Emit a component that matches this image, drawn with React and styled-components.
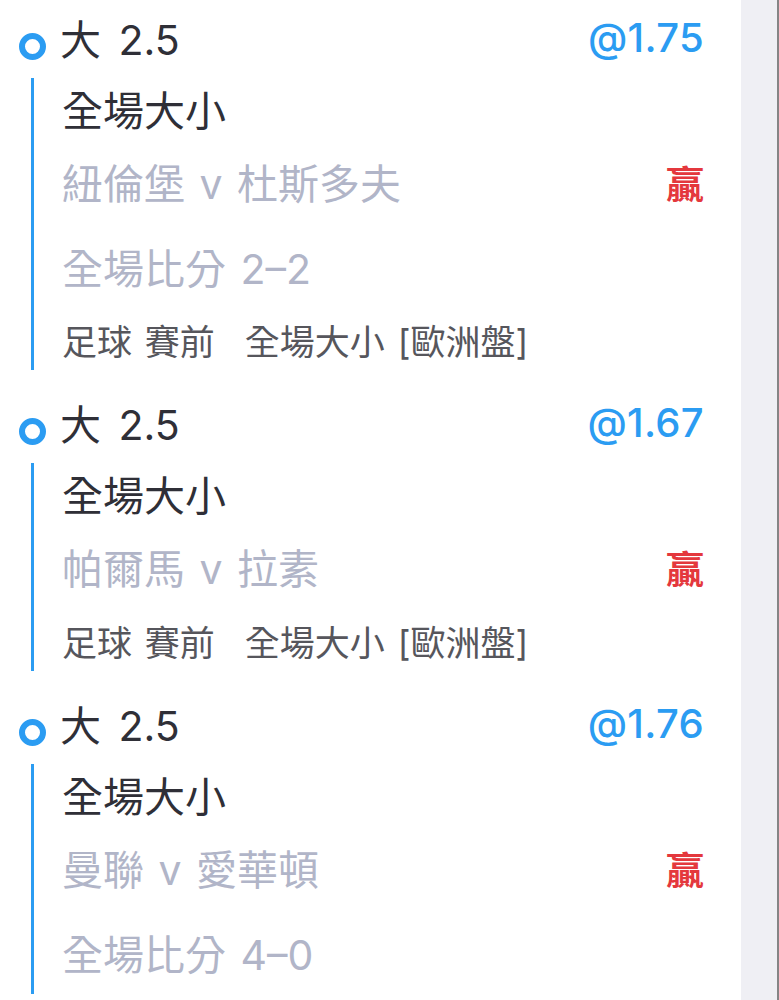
import styled, { createGlobalStyle } from 'styled-components';

const GlobalStyle = createGlobalStyle`
    html, body {
        margin: 0;
        padding: 0;
        background: #fff;
    }
    body {
        font-family: Inter, "Noto Sans CJK TC", sans-serif;
    }
`

const Pagina = styled.div`
    display: flex;
    width: 779px;
    height: 1000px;
    overflow: hidden;
`

const Lista = styled.main`
    width: 741px;
    background: #fff;
    padding-top: 1px;
    display: flex;
    flex-direction: column;
    gap: 16px;
`

const Lateral = styled.aside`
    flex: 1;
    background: #efeff4;
    border-right: 2px solid #858585;
`

const Aposta = styled.section`
    display: flex;
    flex-direction: column;
`

const Cabecalho = styled.div`
    display: flex;
    align-items: center;
    height: 72px;
    padding: 0 37px 0 19px;
    font-size: 41px;
    color: #2f2f37;
    word-spacing: 6px;
`

const Ponto = styled.span`
    width: 15px;
    height: 15px;
    border: 6px solid #2b9cf2;
    border-radius: 50%;
    margin-top: 18px;
    margin-right: 14px;
    flex-shrink: 0;
`

const Selecao = styled.span`
    flex: 1;
`

const Odd = styled.span`
    color: #2b9cf2;
    font-weight: 500;
    font-size: 40px;
    letter-spacing: 0.3px;
`

const Corpo = styled.div`
    margin: 5px 0 0 31px;
    border-left: 3px solid #2b9cf2;
    padding: 0 37px 0 28px;
    display: flex;
    flex-direction: column;
`

const Linha = styled.div`
    display: flex;
    align-items: center;
    justify-content: space-between;
    height: ${props => props.altura}px;
    font-size: ${props => props.tamanho || 41}px;
    color: ${props => props.cor};
    white-space: nowrap;
    word-spacing: 3px;
`

const Resultado = styled.span`
    color: #e4383d;
    font-weight: 700;
    font-size: 38px;
`

const Mercado = styled.span`
    margin-left: 30px;
`

const apostas = [
    { odd: '@1.75', jogo: '紐倫堡 v 杜斯多夫', placar: '全場比分 2–2', info: true },
    { odd: '@1.67', jogo: '帕爾馬 v 拉素', info: true },
    { odd: '@1.76', jogo: '曼聯 v 愛華頓', placar: '全場比分 4–0' },
]

function App() {
    return (
        <Pagina>
            <GlobalStyle />
            <Lista>
                {apostas.map(aposta => (
                    <Aposta key={aposta.odd}>
                        <Cabecalho>
                            <Ponto />
                            <Selecao>大 2.5</Selecao>
                            <Odd>{aposta.odd}</Odd>
                        </Cabecalho>
                        <Corpo>
                            <Linha altura={60} cor="#2f2f37">全場大小</Linha>
                            <Linha altura={86} cor="#b1b5c8">
                                <span>{aposta.jogo}</span>
                                <Resultado>贏</Resultado>
                            </Linha>
                            {aposta.placar && (
                                <Linha altura={84} cor="#b1b5c8">{aposta.placar}</Linha>
                            )}
                            {aposta.info && (
                                <Linha altura={62} tamanho={35} cor="#56565c">
                                    <span>
                                        足球 賽前<Mercado>全場大小 [歐洲盤]</Mercado>
                                    </span>
                                </Linha>
                            )}
                        </Corpo>
                    </Aposta>
                ))}
            </Lista>
            <Lateral />
        </Pagina>
    )
}

export default App
